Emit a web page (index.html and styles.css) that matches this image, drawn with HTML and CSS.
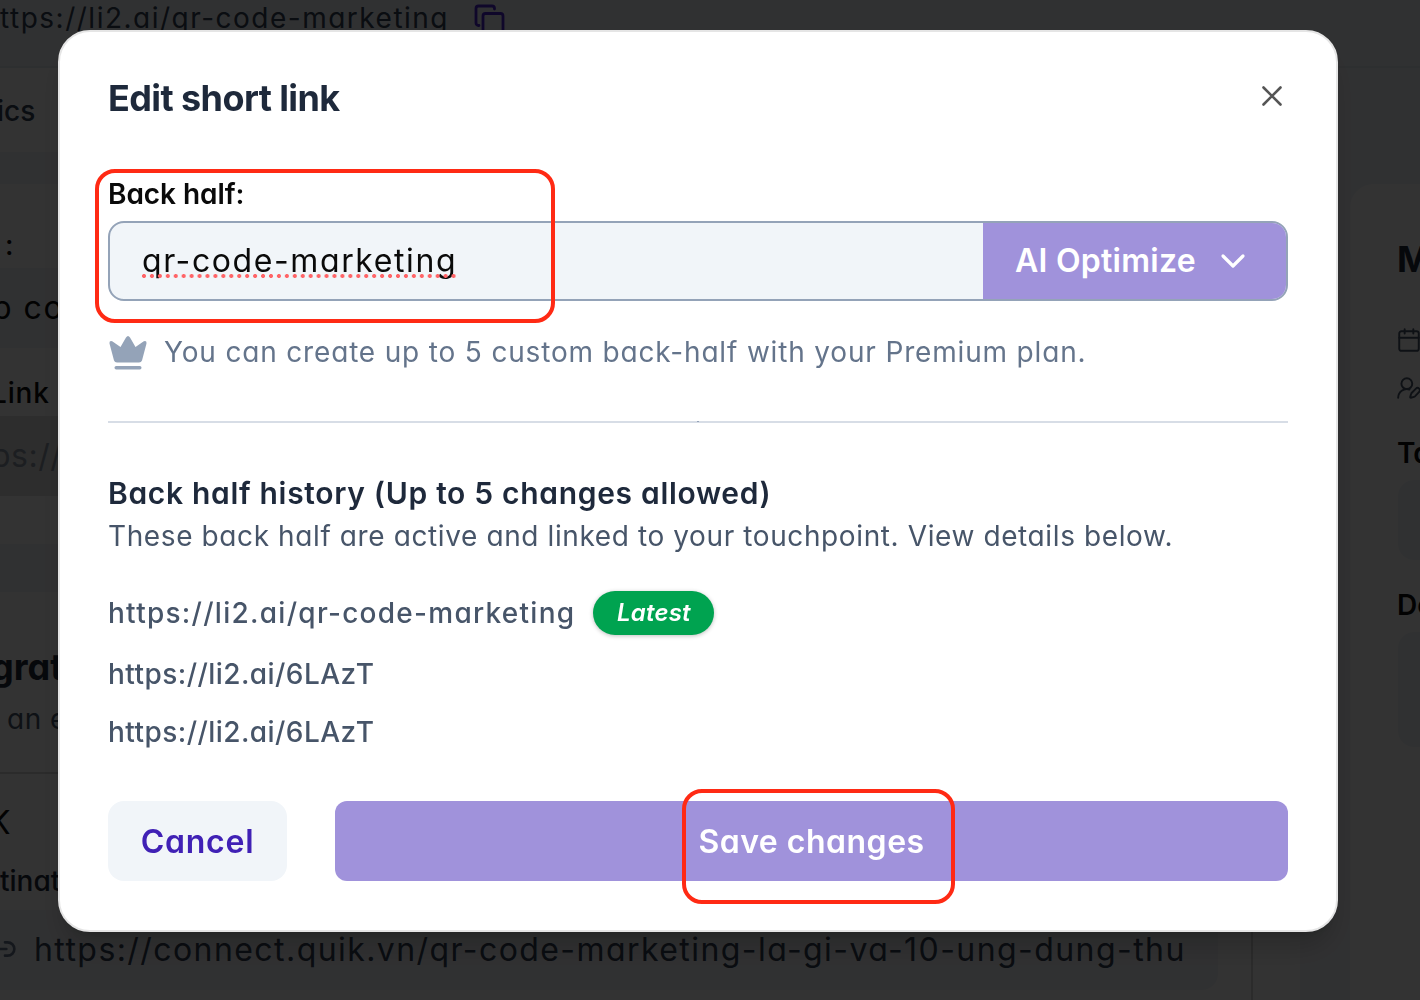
FILE: index.html
```html
<!DOCTYPE html>
<html lang="en">
<head>
<meta charset="utf-8">
<title>Edit short link</title>
<link rel="stylesheet" href="styles.css">
</head>
<body>
<div class="page">
  <header class="topbar">
    <span class="topbar-url">https://li2.ai/qr-code-marketing</span>
    <svg class="copy-icon" viewBox="0 0 32 32"><rect x="9" y="9.500" width="20" height="21" rx="2.500"/><path d="M5 21.500H4.500A2.500 2.500 0 0 1 2 19V4.500A2.500 2.500 0 0 1 4.500 2H18a2.500 2.500 0 0 1 2.500 2.500V5"/></svg>
  </header>
  <div class="columns">
    <main class="main">
      <nav class="tabs"><span class="tab">ics</span></nav>
      <section class="card details">
        <span class="label colon">:</span>
        <div class="field"><span class="shift-p">p code</span></div>
        <span class="label link-label">Link</span>
        <div class="field disabled"><span class="shift-ps">ps://</span></div>
      </section>
      <section class="card integration">
        <h2 class="card-title">grat</h2>
        <p class="card-sub">an e</p>
        <hr class="card-line">
        <div class="inner">
          <span class="qr-k">K</span>
          <span class="label dest">tinat</span>
          <div class="field dest-field">
            <svg class="link-icon" viewBox="0 0 24 24"><path d="M9 17H7A5 5 0 0 1 7 7h2M15 7h2a5 5 0 0 1 0 10h-2M8 12h8"/></svg>
            <span class="dest-url">https://connect.quik.vn/qr-code-marketing-la-gi-va-10-ung-dung-thu</span>
          </div>
        </div>
      </section>
    </main>
    <aside class="side">
      <h2 class="side-title">M</h2>
      <svg class="side-icon" viewBox="0 0 24 24"><rect x="3" y="4" width="18" height="18" rx="2"/><path d="M16 2v4M8 2v4M3 10h18"/></svg>
      <svg class="side-icon user" viewBox="0 0 24 24"><circle cx="10" cy="8" r="5"/><path d="M2 21a8 8 0 0 1 10.400-7.600M21.400 15.600a2.100 2.100 0 0 0-3-3l-4 4a2 2 0 0 0-.5.900l-.8 2.900.1.500.5.100 2.900-.8a2 2 0 0 0 .9-.5z"/></svg>
      <span class="side-label">Tags</span>
      <div class="side-box tags"></div>
      <span class="side-label second">Description</span>
      <div class="side-box desc"></div>
    </aside>
  </div>
</div>

<div class="overlay">
  <div class="modal" role="dialog">
    <div class="modal-head">
      <h1 class="title">Edit short link</h1>
      <svg class="close" viewBox="0 0 32 32"><path d="M7.500 7.500l17 17M24.500 7.500l-17 17"/></svg>
    </div>
    <div class="input-label">Back half:</div>
    <div class="input-group">
      <div class="input"><span class="input-text">qr-code-marketing</span></div>
      <button class="optimize"><span>AI Optimize</span><svg class="chevron" viewBox="0 0 32 32"><path d="M6 11l10 10 10-10"/></svg></button>
    </div>
    <div class="hint">
      <svg class="crown" viewBox="0 0 40 40"><path d="M4.200 9.200L12.500 15 18 5.500Q20 2.500 22 5.500L27.500 15 35.800 9.200Q39 8 38.500 11.500L34 28.500Q33.300 30.500 31 30.500H9Q6.700 30.500 6 28.500L1.500 11.500Q1 8 4.200 9.200Z"/><rect x="6.500" y="34" width="27" height="3.400" rx="1.700"/></svg>
      <span>You can create up to 5 custom back-half with your Premium plan.</span>
    </div>
    <div class="divider"><i class="divider-dot"></i></div>
    <h2 class="history-title">Back half history (Up to 5 changes allowed)</h2>
    <p class="history-sub">These back half are active and linked to your touchpoint. View details below.</p>
    <div class="history-row first"><span class="long-url">https://li2.ai/qr-code-marketing</span><span class="badge">Latest</span></div>
    <div class="history-row">https://li2.ai/6LAzT</div>
    <div class="history-row last">https://li2.ai/6LAzT</div>
    <div class="actions">
      <button class="cancel">Cancel</button>
      <button class="save">Save changes</button>
    </div>
  </div>
  <div class="mark mark-input"></div>
  <div class="mark mark-save"></div>
</div>
</body>
</html>
```
FILE: styles.css
```css
* { box-sizing: border-box; }
html, body { margin: 0; height: 100%; overflow: hidden; }
body {
  font-family: Inter, "Open Sans", sans-serif;
  font-feature-settings: "cv11";
  background: #f1f5f9;
  color: #0a0a0a;
}
h1, h2, p { margin: 0; }
button { border: 0; font: inherit; font-feature-settings: inherit; letter-spacing: inherit; padding: 0; }
svg { fill: none; stroke-linecap: round; stroke-linejoin: round; flex: none; display: block; }
span { white-space: nowrap; }

/* Page behind the dialog */
.page { height: 1000px; overflow: hidden; }
.topbar { height: 68px; border-bottom: 2px solid #e2e8f0; display: flex; align-items: flex-start; gap: 25px; }
.topbar-url { margin-left: -18px; font-size: 28px; line-height: 36px; letter-spacing: 1.500px; color: #334155; }
.copy-icon { width: 32px; height: 34px; margin-top: 3px; stroke: #4a25d0; stroke-width: 2.800; }
.columns { display: grid; grid-template-columns: 1300px 1fr; column-gap: 50px; height: 932px; }
.main { overflow: hidden; }
.tabs { height: 84px; background: #fff; padding-top: 22px; }
.tab { display: block; font-size: 28px; line-height: 42px; font-weight: 500; color: #334155; margin-left: -3px; }
.card { background: #fff; }
.details { margin-top: 32px; height: 360px; padding-top: 40px; }
.label { display: block; font-size: 28px; line-height: 42px; font-weight: 500; color: #0a0a0a; }
.colon { margin-left: 5px; height: 44px; }
.field { height: 80px; background: #f1f5f9; display: flex; align-items: center; font-size: 32px; padding-bottom: 2px; }
.shift-p { margin-left: -8px; letter-spacing: 1.500px; }
.link-label { margin: 24px 0 2px -9px; letter-spacing: .8px; }
.disabled { background: #e2e2e2; color: #8e98a6; }
.shift-ps { margin-left: -9px; letter-spacing: .5px; }
.integration { margin-top: 48px; height: 420px; padding-top: 51px; }
.card-title { font-size: 36px; line-height: 48px; font-weight: 700; color: #1e293b; margin-left: -9px; }
.card-sub { font-size: 28px; line-height: 42px; letter-spacing: .5px; color: #475569; margin: 7px 0 0 7px; }
.card-line { border: 0; height: 2px; background: #d4d4d4; margin: 32px 0 0; }
.inner { width: 1253px; height: 228px; border-right: 2px solid #d4d4d4; padding: 26px 33px 0 0; }
.qr-k { display: block; font-size: 32px; line-height: 46px; margin-left: -11px; }
.dest { margin-top: 14px; height: 50px; color: #1e293b; }
.dest-field { border-radius: 0 16px 16px 0; gap: 17px; }
.link-icon { width: 32px; height: 32px; margin-left: -15px; stroke: #64748b; stroke-width: 2; }
.dest-url { color: #334155; letter-spacing: 1.430px; }
.side { background: #fff; border-radius: 24px 0 0 0; margin-top: 116px; padding: 51px 0 0 48px; overflow: hidden; }
.side-title { font-size: 36px; line-height: 48px; font-weight: 700; color: #1e293b; margin-left: -1px; }
.side-icon { width: 26px; height: 26px; margin: 44px 0 0 -2px; stroke: #475569; stroke-width: 1.800; }
.user { margin-top: 22px; }
.side-label { display: block; font-size: 28px; line-height: 42px; font-weight: 600; margin: 31px 0 0 -1px; }
.side-box { background: #f1f5f9; border-radius: 16px 0 0 16px; margin-top: 6px; }
.tags { height: 80px; }
.desc { height: 115px; }
.side-label.second { margin-top: 24px; }

/* Dialog */
.overlay { position: fixed; inset: 0; background: rgba(0, 0, 0, .8); display: flex; align-items: flex-start; }
.modal {
  width: 1280px; height: 902px; margin: 30px 0 0 58px; padding: 42px 48px 0;
  background: #fff; border: 2px solid #e5e5e5; border-radius: 32px;
  box-shadow: 0 20px 30px -6px rgba(0, 0, 0, .2), 0 8px 12px -8px rgba(0, 0, 0, .2);
}
.modal-head { display: flex; justify-content: space-between; height: 48px; }
.title { font-size: 36px; line-height: 48px; font-weight: 700; letter-spacing: -.6px; color: #1e293b; }
.close { width: 32px; height: 32px; margin-top: 6px; stroke: #555; stroke-width: 2.600; }
.input-label { margin-top: 52px; font-size: 28px; line-height: 40px; font-weight: 600; letter-spacing: -.05px; }
.input-group { margin-top: 7px; height: 80px; display: flex; border: 2px solid #94a3b8; border-radius: 16px; background: #f1f5f9; overflow: hidden; }
.input { flex: 1; padding: 0 0 2px 32px; display: flex; align-items: center; font-size: 32px; }
.input-text { position: relative; letter-spacing: 1.600px; }
.input-text::after {
  content: ""; position: absolute; left: -2px; right: 0; top: 33px; height: 4px;
  background: radial-gradient(circle at 4px 2px, #ff6467 1.700px, transparent 2.300px) 0 0 / 7.950px 4px repeat-x;
}
.optimize { width: 303px; background: #a092db; color: #fff; font-size: 32px; font-weight: 600; letter-spacing: .25px; display: flex; align-items: center; padding: 0 0 2px 32px; }
.chevron { width: 32px; height: 32px; margin: 2px 0 0 21px; stroke: #fff; stroke-width: 3.200; }
.hint { margin-top: 31px; height: 40px; display: flex; align-items: center; gap: 16px; font-size: 28px; letter-spacing: .83px; color: #64748b; }
.crown { width: 40px; height: 40px; fill: #94a3b8; }
.divider { margin-top: 49px; height: 2px; background: #d7dde6; display: flex; justify-content: center; }
.divider-dot { width: 2px; height: 1px; background: #94a3b8; }
.history-title { margin-top: 48px; font-size: 30px; line-height: 44px; font-weight: 600; letter-spacing: .68px; color: #1e293b; }
.history-sub { font-size: 28px; line-height: 42px; letter-spacing: .605px; color: #475569; }
.history-row { font-size: 28px; line-height: 42px; font-weight: 500; letter-spacing: .44px; color: #475569; display: flex; align-items: center; margin-top: 18px; }
.first { margin-top: 34px; height: 44px; gap: 18px; }
.long-url { letter-spacing: 1.270px; }
.last { margin-top: 16px; }
.badge { width: 121px; height: 44px; border-radius: 22px; background: #00a350; color: #fff; font-size: 24px; font-weight: 600; font-style: italic; letter-spacing: .2px; display: flex; align-items: center; justify-content: center; box-shadow: 0 1px 4px rgba(0, 0, 0, .25); }
.actions { margin-top: 48px; display: flex; gap: 48px; height: 80px; font-size: 32px; font-weight: 600; }
.cancel { width: 179px; border-radius: 16px; background: #f1f5f9; color: #4021b5; letter-spacing: .75px; }
.save { flex: 1; border-radius: 12px; background: #a092db; color: #fff; letter-spacing: .5px; }

/* Callout frames */
.mark { position: absolute; border: 4px solid #ff2a14; border-radius: 20px; }
.mark-input { left: 95px; top: 169px; width: 460px; height: 154px; }
.mark-save { left: 682px; top: 789px; width: 273px; height: 115px; }
```
